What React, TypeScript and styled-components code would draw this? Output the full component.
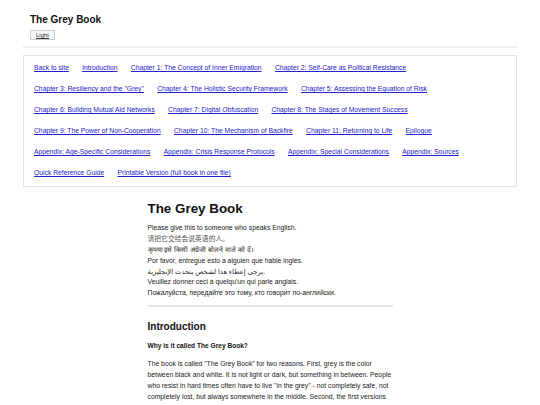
import React from 'react';
import styled, { createGlobalStyle } from 'styled-components';

const Global = createGlobalStyle`
  html, body { margin: 0; padding: 0; background: #fff; }
  body {
    font-family: "Liberation Sans", Arial, "Noto Sans CJK SC", "DejaVu Sans", sans-serif;
    color: #222;
  }
`;

const Page = styled.div`
  padding: 0 23px;
`;

const Header = styled.header`
  padding: 14px 7px 6px;
  border-bottom: 2px solid #eeeeee;
`;

const SiteTitle = styled.h1`
  margin: 0;
  font-size: 10px;
  line-height: 12px;
  font-weight: bold;
  color: #111;
`;

const ThemeButton = styled.button`
  display: block;
  margin-top: 4px;
  padding: 0 5px;
  font: 6px/8px "Liberation Sans", Arial, sans-serif;
  color: #333;
  background: #f7f7f7;
  border: 1px solid #cccccc;
  border-radius: 0;
  text-decoration: underline;
`;

const Nav = styled.nav`
  margin-top: 7px;
  border: 1px solid #e2e2e2;
  padding: 7px 10px 8px;
  display: flex;
  flex-wrap: wrap;
  column-gap: 13.3px;
  row-gap: 11px;
`;

const NavLink = styled.a`
  font-size: 6.75px;
  line-height: 10px;
  color: #2222c8;
  text-decoration: underline;
`;

const Main = styled.main`
  width: 245px;
  margin: 14px auto 0;
`;

const Title = styled.h1`
  margin: 0 0 6px;
  font-size: 13.4px;
  line-height: 16px;
  font-weight: bold;
  color: #111;
`;

const Lines = styled.div`
  font-size: 6.8px;
  line-height: 1.6;
  color: #222;
`;

const Line = styled.p<{ $light?: boolean }>`
  margin: 0;
  color: ${(p) => (p.$light ? '#555' : '#222')};
`;

const Rule = styled.hr`
  border: 0;
  border-top: 2px solid #e5e5e5;
  margin: 6px 0 0;
`;

const SectionTitle = styled.h2`
  margin: 14px 0 8px;
  font-size: 10px;
  line-height: 12px;
  font-weight: bold;
  color: #111;
`;

const Question = styled.h3`
  margin: 0 0 8px;
  font-size: 6.6px;
  line-height: 10px;
  font-weight: bold;
  color: #111;
`;

const Para = styled.p`
  margin: 0;
  font-size: 6.8px;
  line-height: 1.6;
  color: #222;
`;

const links = [
  'Back to site',
  'Introduction',
  'Chapter 1: The Concept of Inner Emigration',
  'Chapter 2: Self-Care as Political Resistance',
  'Chapter 3: Resiliency and the "Grey"',
  'Chapter 4: The Holistic Security Framework',
  'Chapter 5: Assessing the Equation of Risk',
  'Chapter 6: Building Mutual Aid Networks',
  'Chapter 7: Digital Obfuscation',
  'Chapter 8: The Stages of Movement Success',
  'Chapter 9: The Power of Non-Cooperation',
  'Chapter 10: The Mechanism of Backfire',
  'Chapter 11: Returning to Life',
  'Epilogue',
  'Appendix: Age-Specific Considerations',
  'Appendix: Crisis Response Protocols',
  'Appendix: Special Considerations',
  'Appendix: Sources',
  'Quick Reference Guide',
  'Printable Version (full book in one file)',
];

export default function App() {
  return (
    <>
      <Global />
      <Page>
        <Header>
          <SiteTitle>The Grey Book</SiteTitle>
          <ThemeButton type="button">Light</ThemeButton>
        </Header>
        <Nav>
          {links.map((l) => (
            <NavLink key={l} href="#">
              {l}
            </NavLink>
          ))}
        </Nav>
        <Main>
          <Title>The Grey Book</Title>
          <Lines>
            <Line>Please give this to someone who speaks English.</Line>
            <Line $light>请把它交给会说英语的人。</Line>
            <Line>कृपया इसे किसी अंग्रेजी बोलने वाले को दें।</Line>
            <Line>Por favor, entregue esto a alguien que hable inglés.</Line>
            <Line>يرجى إعطاء هذا لشخص يتحدث الإنجليزية.</Line>
            <Line>Veuillez donner ceci à quelqu'un qui parle anglais.</Line>
            <Line>Пожалуйста, передайте это тому, кто говорит по-английски.</Line>
          </Lines>
          <Rule />
          <SectionTitle>Introduction</SectionTitle>
          <Question>Why is it called The Grey Book?</Question>
          <Para>
            The book is called "The Grey Book" for two reasons. First, grey is the color
            between black and white. It is not light or dark, but something in between. People
            who resist in hard times often have to live "in the grey" - not completely safe, not
            completely lost, but always somewhere in the middle. Second, the first versions
            of this book were written on cheap, rough grey paper so it could be shared quietly
            and passed from hand to hand without drawing attention.
          </Para>
        </Main>
      </Page>
    </>
  );
}
